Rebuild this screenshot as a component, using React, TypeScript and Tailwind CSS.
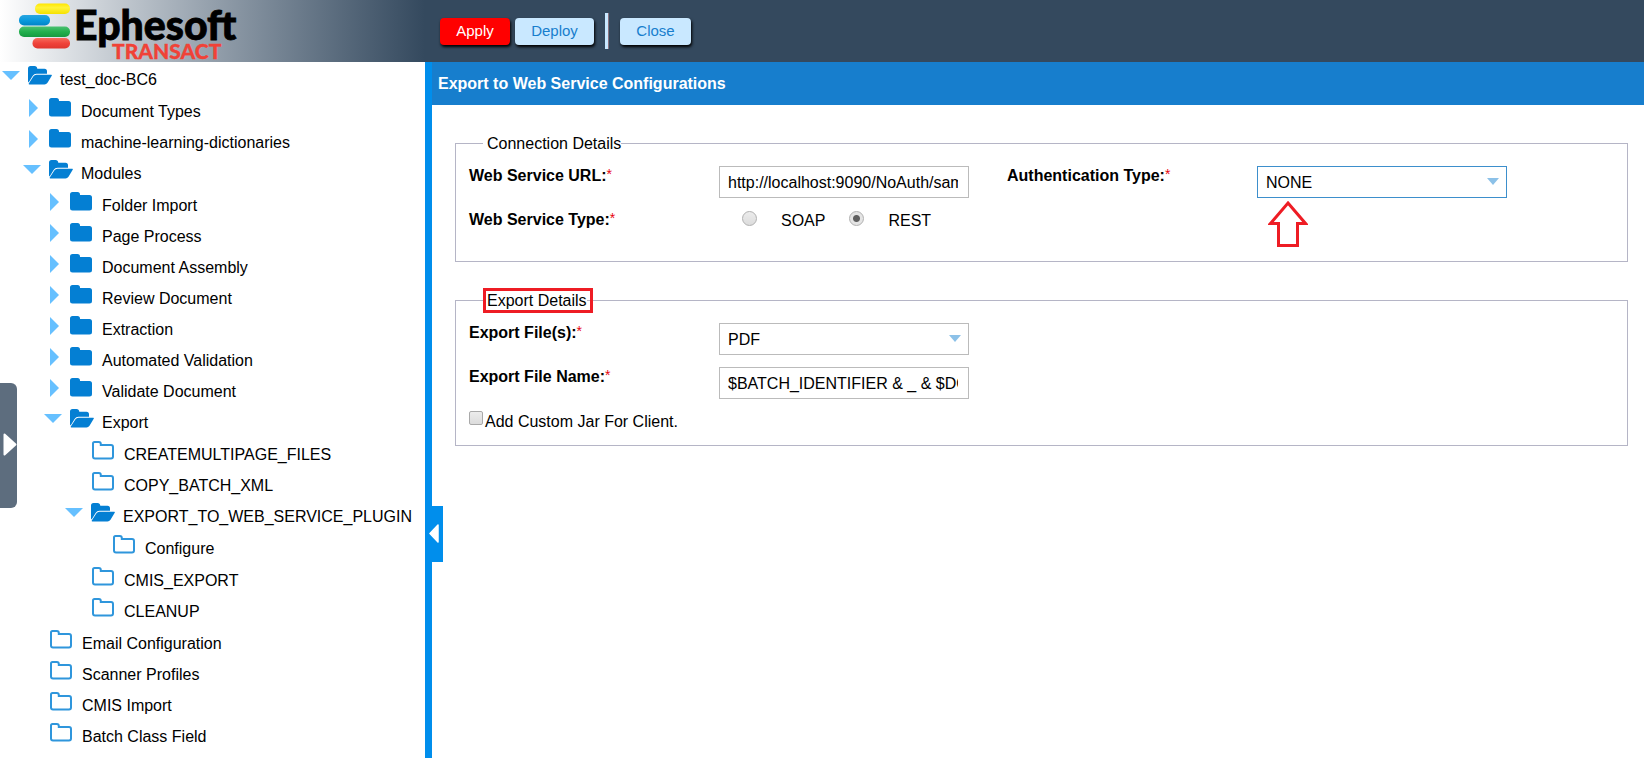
import { useState } from "react";

type TreeNode = {
  label: string;
  leaf?: boolean;
  open?: boolean;
  children?: TreeNode[];
};

const tree: TreeNode[] = [
  {
    label: "test_doc-BC6",
    open: true,
    children: [
      { label: "Document Types" },
      { label: "machine-learning-dictionaries" },
      {
        label: "Modules",
        open: true,
        children: [
          { label: "Folder Import" },
          { label: "Page Process" },
          { label: "Document Assembly" },
          { label: "Review Document" },
          { label: "Extraction" },
          { label: "Automated Validation" },
          { label: "Validate Document" },
          {
            label: "Export",
            open: true,
            children: [
              { label: "CREATEMULTIPAGE_FILES", leaf: true },
              { label: "COPY_BATCH_XML", leaf: true },
              {
                label: "EXPORT_TO_WEB_SERVICE_PLUGIN",
                open: true,
                children: [{ label: "Configure", leaf: true }],
              },
              { label: "CMIS_EXPORT", leaf: true },
              { label: "CLEANUP", leaf: true },
            ],
          },
        ],
      },
      { label: "Email Configuration", leaf: true },
      { label: "Scanner Profiles", leaf: true },
      { label: "CMIS Import", leaf: true },
      { label: "Batch Class Field", leaf: true },
    ],
  },
];

const Logo = () => (
  <svg
    width="240"
    height="62"
    viewBox="0 0 240 62"
    className="overflow-visible"
    aria-label="Ephesoft Transact"
  >
    <defs>
      <linearGradient id="yellow" x1="0" y1="0" x2="0" y2="1">
        <stop offset="0" stopColor="#ffe600" />
        <stop offset="0.4" stopColor="#fff33a" />
        <stop offset="1" stopColor="#f5e100" />
      </linearGradient>
      <linearGradient id="blue" x1="0" y1="0" x2="0" y2="1">
        <stop offset="0" stopColor="#2aa5e0" />
        <stop offset="0.5" stopColor="#0a9ade" />
        <stop offset="1" stopColor="#0083c6" />
      </linearGradient>
      <linearGradient id="green" x1="0" y1="0" x2="0" y2="1">
        <stop offset="0" stopColor="#4cc071" />
        <stop offset="0.5" stopColor="#22b04d" />
        <stop offset="1" stopColor="#169a40" />
      </linearGradient>
      <linearGradient id="red" x1="0" y1="0" x2="0" y2="1">
        <stop offset="0" stopColor="#f66a5c" />
        <stop offset="0.5" stopColor="#f0433a" />
        <stop offset="1" stopColor="#df352e" />
      </linearGradient>
    </defs>
    <rect x="35" y="3.5" width="35" height="10.5" rx="5" fill="url(#yellow)" />
    <rect x="19" y="15" width="31" height="10.5" rx="5" fill="url(#blue)" />
    <rect x="19" y="26.5" width="51" height="10.5" rx="5" fill="url(#green)" />
    <rect x="32.5" y="38" width="37.5" height="10.5" rx="5" fill="url(#red)" />
    <text
      x="74"
      y="40"
      className="font-['Lato',sans-serif] text-[41px] font-black"
      fill="#000"
      stroke="#000"
      strokeWidth="0.8"
    >
      Ephesoft
    </text>
    <text
      x="112"
      y="59"
      className="font-['Lato',sans-serif] text-[21px] font-black"
      fill="#f04237"
      stroke="#f04237"
      strokeWidth="0.3"
    >
      TRANSACT
    </text>
  </svg>
);

const ClosedFolder = () => (
  <svg width="22" height="19" viewBox="0 0 22 19">
    <path
      d="M2.5 0H7.5Q10 0 10 2.5V3H19.5Q22 3 22 5.5V16Q22 18.5 19.5 18.5H2.5Q0 18.5 0 16V2.5Q0 0 2.5 0Z"
      fill="#047fd3"
    />
  </svg>
);

const OpenFolder = () => (
  <svg width="24" height="19" viewBox="0 0 24 19">
    <path
      d="M0 15.5V2.5Q0 0 2.5 0H6.5Q9 0 9.3 2.8H16.5Q19 2.8 19 5.3V7.7H8.5Q6 7.7 4.6 10L0.6 16.4Z"
      fill="#047fd3"
    />
    <path
      d="M8.5 8.7H23.2Q24.3 8.7 23.7 9.7L19.5 16.7Q18.3 18.5 16.5 18.5H1.3Q0.3 18.5 0.8 17.6L5.3 10.5Q6.5 8.7 8.5 8.7Z"
      fill="#047fd3"
    />
  </svg>
);

const LeafFolder = () => (
  <svg width="22" height="19" viewBox="0 0 22 19">
    <path
      d="M2.5 1H6.8Q8.8 1 8.8 3V4H19Q21 4 21 6V15.5Q21 17.5 19 17.5H3Q1 17.5 1 15.5V2.5Q1 1 2.5 1Z"
      fill="none"
      stroke="#2f96dc"
      strokeWidth="2"
    />
  </svg>
);

const TreeItem = ({ node }: { node: TreeNode }) => {
  const [open, setOpen] = useState(!!node.open);
  return (
    <li className="not-last:has-[ul]:pb-px">
      <div className="flex h-[31px] items-center">
        {node.leaf ? (
          <span className="w-[19px]" />
        ) : (
          <button
            aria-label={`Toggle ${node.label}`}
            onClick={() => setOpen(!open)}
            className="mb-1 flex h-[18px] w-[18px] items-center"
          >
            {open ? (
              <svg width="18" height="9" viewBox="0 0 18 9">
                <path d="M0 0H18L9 9Z" fill="#66c0ff" />
              </svg>
            ) : (
              <svg width="9" height="18" viewBox="0 0 9 18" className="ml-1.5">
                <path d="M0 0L9 9L0 18Z" fill="#66c0ff" />
              </svg>
            )}
          </button>
        )}
        <span className="mb-1 ml-2 w-6">
          {node.leaf ? <LeafFolder /> : open ? <OpenFolder /> : <ClosedFolder />}
        </span>
        <a href="#" className="ml-2 pt-1 leading-5 whitespace-nowrap">
          {node.label}
        </a>
      </div>
      {open && node.children && (
        <ul className="pt-px pl-[21px]">
          {node.children.map((child) => (
            <TreeItem key={child.label} node={child} />
          ))}
        </ul>
      )}
    </li>
  );
};

const Label = ({ htmlFor, text }: { htmlFor?: string; text: string }) => (
  <label htmlFor={htmlFor} className="flex w-[250px] shrink-0 leading-5 font-bold">
    {text}
    <span className="text-sm leading-4 font-normal text-red-600">*</span>
  </label>
);

const Select = ({ id, value, active }: { id: string; value: string; active?: boolean }) => (
  <div className="relative w-[250px]">
    <select
      id={id}
      defaultValue={value}
      className={`h-8 w-full appearance-none border bg-white px-2 pt-0.5 outline-none ${
        active ? "border-[#3d8fcc]" : "border-[#bbbbbb]"
      }`}
    >
      <option>{value}</option>
    </select>
    <svg
      width="12"
      height="7"
      viewBox="0 0 12 7"
      className="pointer-events-none absolute top-3 right-2"
    >
      <path d="M0 0H12L6 7Z" fill="#8cc1e8" />
    </svg>
  </div>
);

const TextBox = ({ id, value }: { id: string; value: string }) => (
  <input
    id={id}
    type="text"
    defaultValue={value}
    className="h-8 w-[250px] border border-[#bbbbbb] bg-white pt-0.5 pr-2.5 pl-2 outline-none"
  />
);

const Radio = ({ label, checked }: { label: string; checked?: boolean }) => (
  <label className="flex items-center leading-[22px]">
    <input
      type="radio"
      name="serviceType"
      defaultChecked={checked}
      className="mr-6 mb-1.5 h-[15px] w-[15px] appearance-none rounded-full border border-[#b0b0b0] bg-gradient-to-b from-[#ececec] to-[#dcdcdc] checked:bg-[radial-gradient(circle,#5f5f5f_3px,#e4e4e4_4px)]"
    />
    {label}
  </label>
);

const App = () => {
  return (
    <div className="flex min-h-screen flex-col bg-white font-['Liberation_Sans',Arial,sans-serif] text-base text-black">
      <header className="flex h-[62px] bg-[#34495e]">
        <div className="w-[425px] shrink-0 bg-linear-to-r from-white to-[#34495e]">
          <Logo />
        </div>
        <div className="flex items-center pl-[15px] text-[15px]">
          <button className="h-[27px] w-[70px] rounded bg-[#ff0000] text-white shadow-[1px_2px_3px_#000]">
            Apply
          </button>
          <button className="ml-[5px] h-[27px] w-[79px] rounded bg-[#c9e8ff] text-[#177ecd] shadow-[1px_2px_3px_#000]">
            Deploy
          </button>
          <span className="mx-[11px] h-9 w-1 border-r border-[#8a7480] bg-[#c9e8ff]" />
          <button className="h-[27px] w-[71px] rounded bg-[#c9e8ff] text-[#177ecd] shadow-[1px_2px_3px_#000]">
            Close
          </button>
        </div>
      </header>

      <div className="relative flex flex-1">
        <nav className="w-[425px] shrink-0 pl-0.5">
          <ul>
            {tree.map((node) => (
              <TreeItem key={node.label} node={node} />
            ))}
          </ul>
        </nav>
        <button
          aria-label="Open drawer"
          className="absolute top-[321px] left-0 flex h-[125px] w-[17px] items-center justify-end rounded-r-md bg-[#5d6d7e] pb-0.5"
        >
          <svg width="14" height="23" viewBox="0 0 14 23">
            <path d="M1.5 1.5L12.5 11.5L1.5 21.5Z" fill="#fff" stroke="#fff" strokeWidth="2" strokeLinejoin="round" />
          </svg>
        </button>

        <div className="relative w-[7px] shrink-0 bg-[#008eec]">
          <button
            aria-label="Collapse tree"
            className="absolute top-[444px] left-0 z-10 flex h-14 w-[18px] items-center bg-[#008eec] pb-0.5 pl-1"
          >
            <svg width="10" height="19" viewBox="0 0 10 19">
              <path d="M9 1L1 9.5L9 18Z" fill="#fff" stroke="#fff" strokeWidth="1.5" strokeLinejoin="round" />
            </svg>
          </button>
        </div>

        <main className="min-w-0 flex-1">
          <h1 className="flex h-[43px] items-center bg-[#177ecd] px-1.5 font-bold text-white">
            Export to Web Service Configurations
          </h1>
          <form className="pt-7 pr-4 pl-[23px]">
            <fieldset className="border border-[#b5b5c6] pr-3 pb-[19px] pl-[13px]">
              <legend className="ml-3.5 pt-0.5 pl-1 leading-[18px]">Connection Details</legend>
              <div className="flex gap-[38px] pt-[13px]">
                <div className="flex flex-col gap-3">
                  <div className="flex h-8">
                    <Label htmlFor="url" text="Web Service URL:" />
                    <TextBox id="url" value="http://localhost:9090/NoAuth/sample" />
                  </div>
                  <div className="flex h-8">
                    <Label text="Web Service Type:" />
                    <div className="flex h-[22px] gap-6 pl-[23px]">
                      <Radio label="SOAP" />
                      <Radio label="REST" checked />
                    </div>
                  </div>
                </div>
                <div className="flex h-8">
                  <Label htmlFor="auth" text="Authentication Type:" />
                  <div className="relative">
                    <Select id="auth" value="NONE" active />
                    <svg
                      width="40"
                      height="48"
                      viewBox="0 0 40 48"
                      className="absolute top-[34px] left-[11px]"
                    >
                      <path
                        d="M20 3L37.5 23.5H29.5V45.5H10.5V23.5H2.5Z"
                        fill="none"
                        stroke="#ee1c24"
                        strokeWidth="3"
                        strokeLinejoin="miter"
                      />
                    </svg>
                  </div>
                </div>
              </div>
            </fieldset>

            <fieldset className="mt-7 border border-[#b5b5c6] pr-3 pb-3 pl-[13px]">
              <legend className="relative ml-3.5 pt-0.5 pl-1 leading-[18px]">
                Export Details
                <span className="absolute -top-0.5 -right-1.5 left-0 h-[25px] border-3 border-[#ee1c24]" />
              </legend>
              <div className="flex flex-col gap-3 pt-[13px]">
                <div className="flex h-8">
                  <Label htmlFor="files" text="Export File(s):" />
                  <Select id="files" value="PDF" />
                </div>
                <div className="flex h-8">
                  <Label htmlFor="fileName" text="Export File Name:" />
                  <TextBox id="fileName" value="$BATCH_IDENTIFIER & _ & $DOCUMENT_IDENTIFIER" />
                </div>
                <label className="flex items-center leading-[22px]">
                  <input
                    type="checkbox"
                    className="mr-0.5 mb-2 h-3.5 w-3.5 appearance-none rounded-xs border border-[#a9a9a9] bg-gradient-to-b from-[#ececec] to-[#dcdcdc] checked:bg-[#5f5f5f]"
                  />
                  Add Custom Jar For Client.
                </label>
              </div>
            </fieldset>
          </form>
        </main>
      </div>
    </div>
  );
};

export default App;
